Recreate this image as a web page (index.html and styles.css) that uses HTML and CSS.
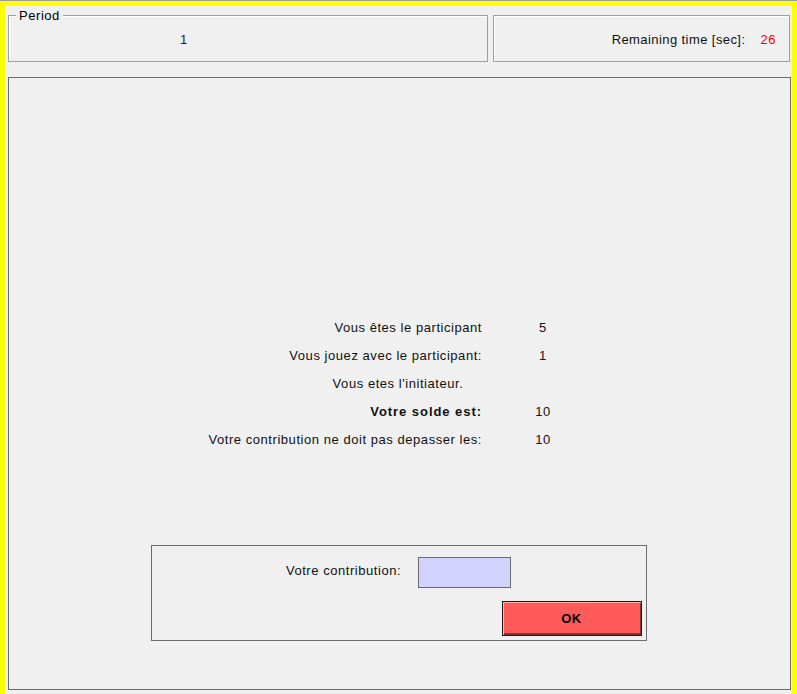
FILE: index.html
```html
<!DOCTYPE html>
<html lang="fr">
<head>
<meta charset="utf-8">
<title>Period</title>
<link rel="stylesheet" href="styles.css">
</head>
<body>
<div class="window">
  <div class="frame">
    <div class="top-row">
      <div class="box period-box">
        <span class="legend">Period</span>
        <span class="period-value">1</span>
      </div>
      <div class="box time-box">
        <span class="time-label">Remaining time [sec]:</span>
        <span class="time-value">26</span>
      </div>
    </div>
    <div class="main-panel">
      <div class="info-grid">
        <div class="label">Vous êtes le participant</div>
        <div class="value">5</div>
        <div class="label">Vous jouez avec le participant:</div>
        <div class="value">1</div>
        <div class="span-row">Vous etes l'initiateur.</div>
        <div class="label bold">Votre solde est:</div>
        <div class="value">10</div>
        <div class="label">Votre contribution ne doit pas depasser les:</div>
        <div class="value">10</div>
      </div>
      <div class="input-box">
        <div class="input-row">
          <span class="input-label">Votre contribution:</span>
          <div class="input-field"></div>
        </div>
        <div class="button-row">
          <button class="ok-button">OK</button>
        </div>
      </div>
    </div>
  </div>
</div>
</body>
</html>
```

FILE: styles.css
```css
html, body {
  margin: 0;
  padding: 0;
  background: #f0f0f0;
  overflow: hidden;
}

body {
  font-family: "Liberation Sans", Arial, sans-serif;
  font-size: 13px;
  letter-spacing: 0.55px;
  color: #111;
}

.window {
  border-top: 1px solid #9c9c9c;
}

.frame {
  border: 5px solid #ffff00;
  background: #f0f0f0;
  height: 700px;
  box-sizing: content-box;
  padding: 9px 1px 0 3px;
}

.top-row {
  display: flex;
  gap: 5px;
  width: 782px;
}

.box {
  position: relative;
  box-sizing: border-box;
  height: 47px;
  border: 1px solid #a0a0a0;
  box-shadow: inset 1px 1px 0 #ffffff;
  display: flex;
  align-items: center;
}

.period-box {
  width: 480px;
  padding-left: 171px;
}

.legend {
  position: absolute;
  top: -8px;
  left: 7px;
  padding: 0 3px;
  line-height: 15px;
  background: #f0f0f0;
  color: #000;
}

.period-value {
  color: #2a1a0a;
  padding-top: 2px;
}

.time-box {
  width: 297px;
  justify-content: flex-end;
  gap: 15px;
  padding-right: 13px;
  padding-top: 2px;
}

.time-label {
  letter-spacing: 0.42px;
}

.time-value {
  color: #ff0000;
}

.main-panel {
  margin-top: 15px;
  box-sizing: border-box;
  width: 783px;
  height: 613px;
  border: 1px solid #6b6b6b;
  padding-top: 236px;
  display: flex;
  flex-direction: column;
  align-items: center;
}

.info-grid {
  display: grid;
  grid-template-columns: 274px 90px;
  column-gap: 16px;
  grid-auto-rows: 28px;
  line-height: 28px;
  margin-left: -3px;
}

.label {
  text-align: right;
  white-space: nowrap;
}

.bold {
  font-weight: bold;
  letter-spacing: 0.95px;
}

.value {
  text-align: center;
}

.span-row {
  grid-column: 1 / 3;
  text-align: center;
}

.input-box {
  margin-top: 91px;
  margin-left: -2px;
  box-sizing: border-box;
  width: 496px;
  height: 96px;
  border: 1px solid #6b6b6b;
  padding: 11px 4px 4px 4px;
  display: flex;
  flex-direction: column;
}

.input-row {
  display: flex;
  justify-content: center;
  align-items: center;
  gap: 17px;
  height: 31px;
}

.input-label {
  margin-top: -4px;
}

.input-field {
  box-sizing: border-box;
  width: 93px;
  height: 31px;
  background: #d2d2ff;
  border: 1px solid #6b6b6b;
}

.button-row {
  margin-top: 13px;
  display: flex;
  justify-content: flex-end;
}

.ok-button {
  box-sizing: border-box;
  width: 140px;
  height: 35px;
  background: #ff5a5a;
  border: 1px solid #1a1a1a;
  box-shadow: inset 1px 1px 0 #ffb4b4, inset -1px -2px 0 #7a3a3a;
  font-family: "Liberation Sans", Arial, sans-serif;
  font-size: 13px;
  letter-spacing: 0.55px;
  font-weight: bold;
  color: #000;
  padding: 0;
}
```
